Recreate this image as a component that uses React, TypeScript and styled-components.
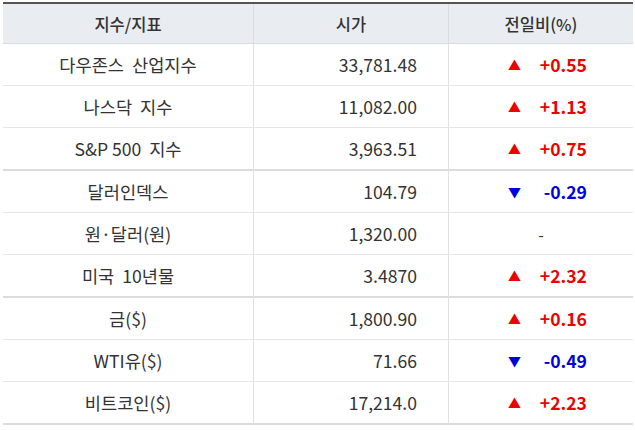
import React from "react";
import styled, { createGlobalStyle } from "styled-components";

const Global = createGlobalStyle`
  html, body { margin: 0; padding: 0; background: #fff; }
  body { font-family: "Noto Sans CJK KR", "Noto Sans", sans-serif; }
`;

const Wrap = styled.div`
  padding: 2px 2px 0 3px;
`;

const Table = styled.div`
  width: 630px;
  border-top: 2px solid #555;
  display: grid;
  grid-template-columns: 251px 195px 1fr;
`;

const HeadCell = styled.div<{ $last?: boolean }>`
  height: 39px;
  background: #e9edf1;
  border-bottom: 1px solid #d6dbe0;
  border-right: ${(p) => (p.$last ? "none" : "1px solid #d9dde2")};
  display: flex;
  align-items: center;
  justify-content: center;
  font-size: 16.5px;
  font-weight: 500;
  color: #333;
`;

const Cell = styled.div<{ $thick?: boolean; $last?: boolean; $align?: string }>`
  height: 41px;
  border-bottom: ${(p) => (p.$thick ? "2px solid #dcdcdc" : "1px solid #e6e6e6")};
  border-right: ${(p) => (p.$last ? "none" : "1px solid #e1e1e1")};
  display: flex;
  align-items: center;
  justify-content: ${(p) => p.$align || "center"};
  font-size: 17.6px;
  color: #333;
  white-space: pre;
`;

const Price = styled(Cell)`
  padding-right: 31px;
`;

const Change = styled.div`
  width: 79px;
  margin-left: 59px;
  display: flex;
  align-items: center;
  justify-content: space-between;
`;

const Arrow = styled.span<{ $up: boolean }>`
  font-size: 13px;
  color: ${(p) => (p.$up ? "#ee0000" : "#0000dd")};
`;

const Val = styled.span<{ $up: boolean }>`
  font-weight: 700;
  color: ${(p) => (p.$up ? "#ee0000" : "#0000dd")};
`;

const Dash = styled.span`
  color: #333;
  font-size: 16px;
`;

type Row = { name: string; price: string; change?: string; up?: boolean; thick?: boolean };

const rows: Row[] = [
  { name: "다우존스  산업지수", price: "33,781.48", change: "+0.55", up: true },
  { name: "나스닥  지수", price: "11,082.00", change: "+1.13", up: true },
  { name: "S&P 500  지수", price: "3,963.51", change: "+0.75", up: true, thick: true },
  { name: "달러인덱스", price: "104.79", change: "-0.29", up: false },
  { name: "원·달러(원)", price: "1,320.00" },
  { name: "미국  10년물", price: "3.4870", change: "+2.32", up: true, thick: true },
  { name: "금($)", price: "1,800.90", change: "+0.16", up: true },
  { name: "WTI유($)", price: "71.66", change: "-0.49", up: false },
  { name: "비트코인($)", price: "17,214.0", change: "+2.23", up: true, thick: true },
];

export default function App() {
  return (
    <>
      <Global />
      <Wrap>
        <Table>
          <HeadCell>지수/지표</HeadCell>
          <HeadCell>시가</HeadCell>
          <HeadCell $last>전일비(%)</HeadCell>
          {rows.map((r) => (
            <React.Fragment key={r.name}>
              <Cell $thick={r.thick}>{r.name}</Cell>
              <Price $thick={r.thick} $align="flex-end">
                {r.price}
              </Price>
              <Cell $thick={r.thick} $last $align={r.change ? "flex-start" : "center"}>
                {r.change ? (
                  <Change>
                    <Arrow $up={!!r.up}>{r.up ? "▲" : "▼"}</Arrow>
                    <Val $up={!!r.up}>{r.change}</Val>
                  </Change>
                ) : (
                  <Dash>-</Dash>
                )}
              </Cell>
            </React.Fragment>
          ))}
        </Table>
      </Wrap>
    </>
  );
}
